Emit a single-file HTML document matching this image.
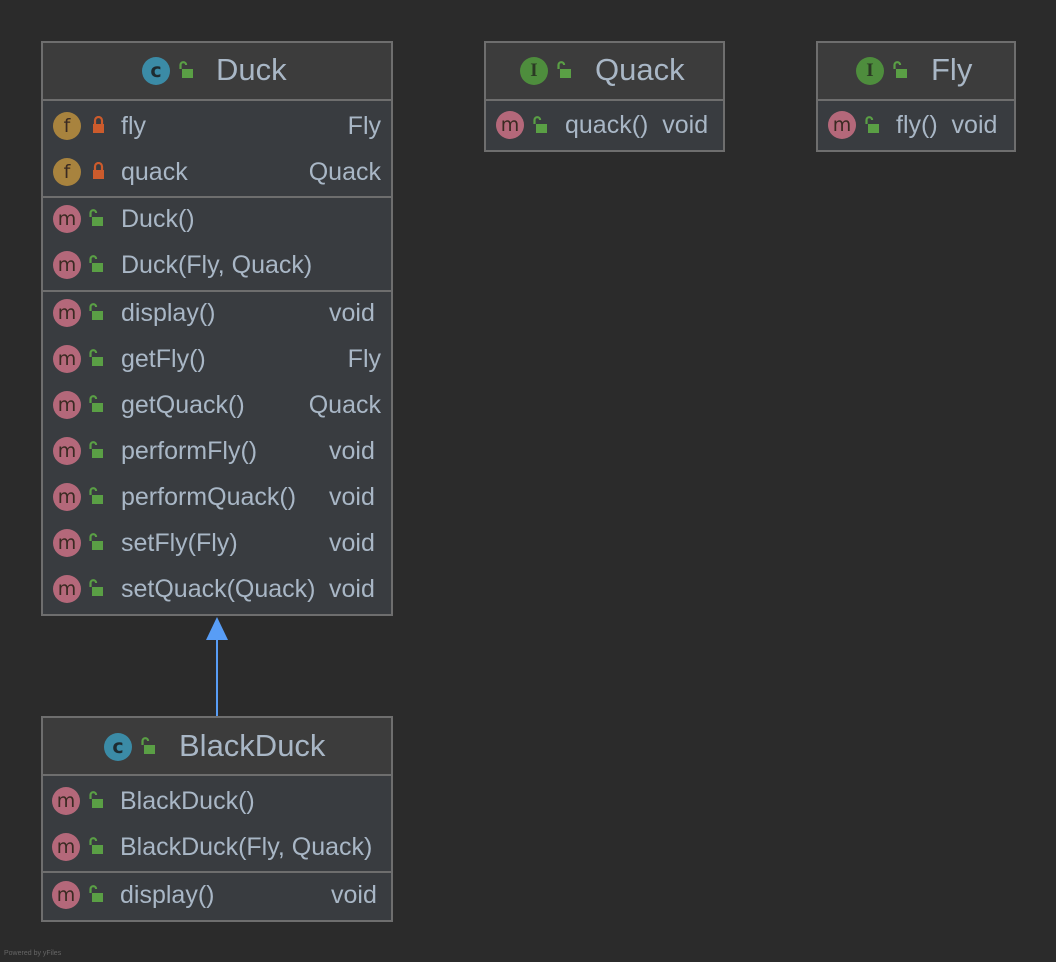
<!DOCTYPE html>
<html><head><meta charset="utf-8"><style>
body{margin:0;width:1056px;height:962px;background:#2b2b2b;position:relative;overflow:hidden;font-family:"Liberation Sans","DejaVu Sans",sans-serif;color:#a9b7c6}
.box{position:absolute;border:2px solid #6e6e6e;background:#393c40;box-sizing:border-box}
.hd{position:absolute;left:0;right:0;top:0;background:#3c3c3c;border-bottom:2px solid #6e6e6e}
.sep{position:absolute;left:0;right:0;height:2px;background:#6e6e6e}
.t{position:absolute;font-size:25px;white-space:pre;line-height:30px}
.ti{position:absolute;font-size:31px;line-height:36px;white-space:pre}
.ic{position:absolute;width:28px;height:28px;border-radius:50%;font-size:19px;line-height:28px;text-align:center;color:#3a2a22;font-family:"DejaVu Sans",sans-serif}
.m{background:#b4687a}.f{background:#a8833e}.c{background:#3b8ba6;color:#1e2b30;font-weight:bold}.i{background:#4e8d3d;color:#2b3a24;font-family:"Liberation Serif",serif;font-weight:bold}
.lk{position:absolute;width:15px;height:17px}
</style></head><body>
<svg width="0" height="0" style="position:absolute"><defs>
<symbol id="lo" viewBox="0 0 15 17"><path d="M2.5 8V4a2.8 2.8 0 0 1 5.6 0" fill="none" stroke="#5a9f45" stroke-width="2.2"/><rect x="4" y="8" width="11" height="9" fill="#5a9f45"/></symbol>
<symbol id="lc" viewBox="0 0 15 17"><path d="M4 8V4.5a3.5 3.5 0 0 1 7 0V8" fill="none" stroke="#cc5b2c" stroke-width="2.2"/><rect x="2" y="8" width="11" height="9" fill="#cc5b2c"/></symbol>
</defs></svg>

<!-- Duck -->
<div class="box" style="left:41px;top:41px;width:352px;height:575px">
<div class="hd" style="height:56px"></div>
<div class="sep" style="top:153px"></div>
<div class="sep" style="top:247px"></div>
</div>
<div class="ic c" style="left:142px;top:57px">c</div><svg class="lk" style="left:178px;top:61px"><use href="#lo"/></svg><div class="ti" style="left:216px;top:52px">Duck</div>

<div class="ic f" style="left:53px;top:112px">f</div><svg class="lk" style="left:91px;top:116px"><use href="#lc"/></svg><div class="t" style="left:121px;top:111px">fly</div><div class="t" style="right:675px;top:111px">Fly</div>
<div class="ic f" style="left:53px;top:158px">f</div><svg class="lk" style="left:91px;top:162px"><use href="#lc"/></svg><div class="t" style="left:121px;top:157px">quack</div><div class="t" style="right:675px;top:157px">Quack</div>

<div class="ic m" style="left:53px;top:205px">m</div><svg class="lk" style="left:88px;top:209px"><use href="#lo"/></svg><div class="t" style="left:121px;top:204px">Duck()</div>
<div class="ic m" style="left:53px;top:251px">m</div><svg class="lk" style="left:88px;top:255px"><use href="#lo"/></svg><div class="t" style="left:121px;top:250px">Duck(Fly, Quack)</div>

<div class="ic m" style="left:53px;top:299px">m</div><svg class="lk" style="left:88px;top:303px"><use href="#lo"/></svg><div class="t" style="left:121px;top:298px">display()</div><div class="t" style="left:329px;top:298px">void</div>
<div class="ic m" style="left:53px;top:345px">m</div><svg class="lk" style="left:88px;top:349px"><use href="#lo"/></svg><div class="t" style="left:121px;top:344px">getFly()</div><div class="t" style="right:675px;top:344px">Fly</div>
<div class="ic m" style="left:53px;top:391px">m</div><svg class="lk" style="left:88px;top:395px"><use href="#lo"/></svg><div class="t" style="left:121px;top:390px">getQuack()</div><div class="t" style="right:675px;top:390px">Quack</div>
<div class="ic m" style="left:53px;top:437px">m</div><svg class="lk" style="left:88px;top:441px"><use href="#lo"/></svg><div class="t" style="left:121px;top:436px">performFly()</div><div class="t" style="left:329px;top:436px">void</div>
<div class="ic m" style="left:53px;top:483px">m</div><svg class="lk" style="left:88px;top:487px"><use href="#lo"/></svg><div class="t" style="left:121px;top:482px">performQuack()</div><div class="t" style="left:329px;top:482px">void</div>
<div class="ic m" style="left:53px;top:529px">m</div><svg class="lk" style="left:88px;top:533px"><use href="#lo"/></svg><div class="t" style="left:121px;top:528px">setFly(Fly)</div><div class="t" style="left:329px;top:528px">void</div>
<div class="ic m" style="left:53px;top:575px">m</div><svg class="lk" style="left:88px;top:579px"><use href="#lo"/></svg><div class="t" style="left:121px;top:574px">setQuack(Quack)</div><div class="t" style="left:329px;top:574px">void</div>

<!-- Quack -->
<div class="box" style="left:484px;top:41px;width:241px;height:111px">
<div class="hd" style="height:56px"></div>
</div>
<div class="ic i" style="left:520px;top:57px">I</div><svg class="lk" style="left:556px;top:61px"><use href="#lo"/></svg><div class="ti" style="left:595px;top:52px">Quack</div>
<div class="ic m" style="left:496px;top:111px">m</div><svg class="lk" style="left:532px;top:116px"><use href="#lo"/></svg><div class="t" style="left:565px;top:110px">quack()  void</div>

<!-- Fly -->
<div class="box" style="left:816px;top:41px;width:200px;height:111px">
<div class="hd" style="height:56px"></div>
</div>
<div class="ic i" style="left:856px;top:57px">I</div><svg class="lk" style="left:892px;top:61px"><use href="#lo"/></svg><div class="ti" style="left:931px;top:52px">Fly</div>
<div class="ic m" style="left:828px;top:111px">m</div><svg class="lk" style="left:864px;top:116px"><use href="#lo"/></svg><div class="t" style="left:896px;top:110px">fly()  void</div>

<!-- arrow -->
<svg style="position:absolute;left:200px;top:614px" width="34" height="104"><line x1="17" y1="22" x2="17" y2="104" stroke="#589df6" stroke-width="2"/><polygon points="17,3 6,26 28,26" fill="#589df6"/></svg>

<!-- BlackDuck -->
<div class="box" style="left:41px;top:716px;width:352px;height:206px">
<div class="hd" style="height:56px"></div>
<div class="sep" style="top:153px"></div>
</div>
<div class="ic c" style="left:104px;top:733px">c</div><svg class="lk" style="left:140px;top:737px"><use href="#lo"/></svg><div class="ti" style="left:179px;top:728px">BlackDuck</div>
<div class="ic m" style="left:52px;top:787px">m</div><svg class="lk" style="left:88px;top:791px"><use href="#lo"/></svg><div class="t" style="left:120px;top:786px">BlackDuck()</div>
<div class="ic m" style="left:52px;top:833px">m</div><svg class="lk" style="left:88px;top:837px"><use href="#lo"/></svg><div class="t" style="left:120px;top:832px">BlackDuck(Fly, Quack)</div>
<div class="ic m" style="left:52px;top:881px">m</div><svg class="lk" style="left:88px;top:885px"><use href="#lo"/></svg><div class="t" style="left:120px;top:880px">display()</div><div class="t" style="left:331px;top:880px">void</div>

<div style="position:absolute;left:4px;top:950px;font-size:7px;color:#666">Powered by yFiles</div>
</body></html>
